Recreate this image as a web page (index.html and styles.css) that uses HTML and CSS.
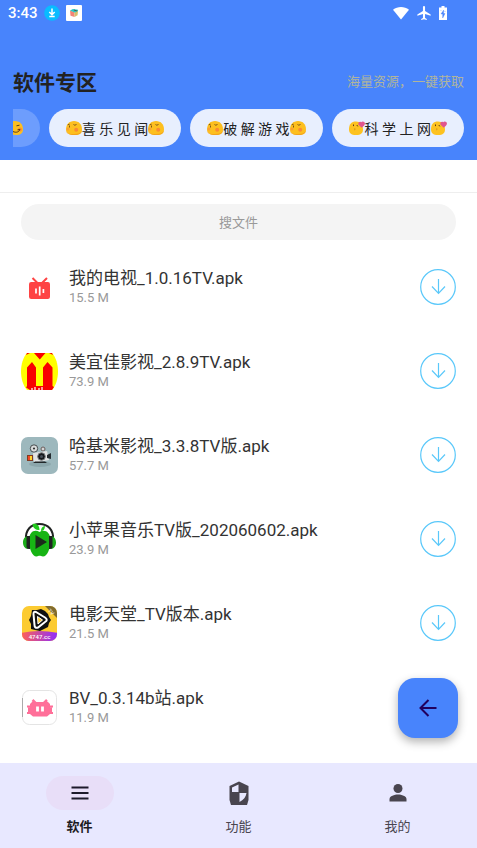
FILE: index.html
```html
<!DOCTYPE html>
<html lang="zh-CN">
<head>
  <meta charset="UTF-8">
  <meta name="viewport" content="width=device-width, initial-scale=1">
  <title>软件专区</title>
  <link rel="stylesheet" href="styles.css">
</head>
<body>

  <!-- shared icons -->
  <svg class="sprite" aria-hidden="true">
    <symbol id="shy" viewBox="0 0 16 16">
      <path d="M0 9.500C0 4.500 3 1 8 1s8 3.500 8 8.500c0 3.500-2 5.500-7.500 5.500S0 13 0 9.500z" fill="#fdbf1f"/>
      <path d="M0 10.500C1 13.500 3.500 14 8 14s7-1 7.900-3.500C15.600 13.500 13 15 8.500 15S.5 14 0 10.500z" fill="#f3a31d"/>
      <circle cx="1.900" cy="9" r="1.500" fill="#f9a035"/>
      <circle cx="10.200" cy="9.700" r="2" fill="#f98a35"/>
      <path d="M1.800 4.800l1.800-.6M3.500 5.500v2M7.500 4.500l1.300.7 1.700-.7" fill="none" stroke="#5c3b17" stroke-width=".8"/>
    </symbol>
    <symbol id="kiss" viewBox="0 0 16 16">
      <path d="M0 9.500C0 4 2.500 1.500 7 1.500s7 3.500 7 8c0 3.500-2 5.500-7 5.500S0 13 0 9.500z" fill="#fdc220"/>
      <path d="M4.500 4.500v1.600M7.800 5l1 1.400" fill="none" stroke="#5c3b17" stroke-width="1"/>
      <path d="M5 8.800l1.300.4-1 .8" fill="none" stroke="#c98a1c" stroke-width=".8"/>
      <path d="M12.700 7.800L9.600 4.800C8.400 2.900 10.700.8 12.100 2.300c1.400-1.800 4.200-.5 3.800 1.600-.3 1.600-1.900 2.200-3.200 3.900z" fill="#e0558d"/>
    </symbol>
    <symbol id="smirk" viewBox="0 0 16 16">
      <path d="M0 9.500C0 4.500 3 1 8 1s8 3.500 8 8.500c0 3.500-2 5.500-7.500 5.500S0 13 0 9.500z" fill="#fdbf1f"/>
      <circle cx="13" cy="9.500" r="1.900" fill="#f98a35"/>
      <path d="M6 11.500c3 1.500 6 .6 7-2l-2.500.3M9.500 5.800l3-.6" fill="none" stroke="#5c3b17" stroke-width="1"/>
    </symbol>
    <symbol id="download" viewBox="0 0 36 36">
      <circle cx="18" cy="18" r="17.300" fill="none" stroke="#5ac8fa" stroke-width="1.200"/>
      <path d="M18.500 10v14.500M12 17.500l6.500 6.800 6.500-6.800" fill="none" stroke="#5ac8fa" stroke-width="1.200"/>
    </symbol>
  </svg>

  <div class="app">
    <header class="header">
      <div class="status-bar">
        <span class="time">3:43</span>
        <svg width="16" height="16" viewBox="0 0 16 16"><circle cx="8" cy="8" r="7.800" fill="#09bcff"/><path d="M8 3.500v5.800M5.300 7L8 9.700 10.700 7M5.300 11.500h5.400" fill="none" stroke="#fff" stroke-width="1.500"/></svg>
        <svg width="16" height="16" viewBox="0 0 16 16"><rect width="16" height="16" rx="1" fill="#fff"/><path d="M4 5.500l4.500 1.800V12L4.500 10.800z" fill="#f28478"/><path d="M8.500 7.300L12 5.500l-.4 4.800L8.500 12z" fill="#d6bd6c"/><path d="M4 5.500l3-1.500 5 .7v1.200L8.500 7.400z" fill="#25c8c5"/><path d="M8 5l3 1" stroke="#55584b"/></svg>
        <div class="status-right">
          <svg width="16" height="14" viewBox="0 0 16 14"><path d="M8 13.500L0 3.800C4.500 0 11.500 0 16 3.800z" fill="#fff"/></svg>
          <svg width="14" height="14" viewBox="2 2 20 20"><path d="M21.500 16v-2l-8-5V3.500a1.500 1.500 0 0 0-3 0V9l-8 5v2l8-2.500V19L8 20.500V22l4-1 4 1v-1.500L13.500 19v-5.500z" fill="#fff"/></svg>
          <svg width="8" height="14" viewBox="0 0 8 14"><path d="M2.500 0h3v1.500H8V14H0V1.500h2.500z" fill="#fff"/><path d="M4.700 4L2 8h1.700v4L6 7.500H4.500zM1.500 4.500h1M5.500 5.500h1" fill="#4884fc" stroke="#4884fc" stroke-width=".4"/></svg>
        </div>
      </div>

      <div class="title-row">
        <h1>软件专区</h1>
        <p class="slogan">海量资源，一键获取</p>
      </div>

      <div class="chips">
        <button class="chip chip-active" aria-label="当前分类"><svg class="emoji"><use href="#smirk"/></svg></button>
        <button class="chip"><svg class="emoji"><use href="#shy"/></svg>喜 乐 见 闻<svg class="emoji"><use href="#shy"/></svg></button>
        <button class="chip"><svg class="emoji"><use href="#shy"/></svg>破 解 游 戏<svg class="emoji"><use href="#shy"/></svg></button>
        <button class="chip"><svg class="emoji"><use href="#kiss"/></svg>科 学 上 网<svg class="emoji"><use href="#kiss"/></svg></button>
      </div>
    </header>

    <div class="toolbar"></div>

    <main class="content">
      <input class="search" type="text" placeholder="搜文件" aria-label="搜文件">

      <ul class="files">
        <li class="file">
          <svg class="file-icon" viewBox="0 0 37 37"><path d="M11.500 9l6 6M26 9l-6 6" stroke="#fe4344" stroke-width="2"/><rect x="8" y="13" width="21" height="17" rx="2.200" fill="#fe4344"/><path d="M15 19.500v5M18.700 17.500v9M22.400 20v4" stroke="#fff" stroke-width="1.700"/></svg>
          <div class="file-info">
            <h2>我的电视_1.0.16TV.apk</h2>
            <p>15.5 M</p>
          </div>
          <button class="download" aria-label="下载"><svg><use href="#download"/></svg></button>
        </li>
        <li class="file">
          <svg class="file-icon" viewBox="0 0 37 37"><path d="M6 0h25c8 9 8 28 0 37H6C-2 28-2 9 6 0z" fill="#ff0"/><path d="M13 0h11.500l-5.700 6.500zM6 0h3L5 2zM28 0h3l1 2zM6 33V14.500l5-5.500 4 5.500V33h7V14.500L26.500 9l5 5.500V33L33 34l-2 3H9l-4-2.500z" fill="#f80000"/><path d="M11 37v-2M14 37v-3M18 37v-2M21 37v-3" stroke="#fff" stroke-width="1.200"/></svg>
          <div class="file-info">
            <h2>美宜佳影视_2.8.9TV.apk</h2>
            <p>73.9 M</p>
          </div>
          <button class="download" aria-label="下载"><svg><use href="#download"/></svg></button>
        </li>
        <li class="file">
          <svg class="file-icon" viewBox="0 0 37 37"><rect width="37" height="37" rx="7" fill="#9db8bd"/><ellipse cx="19" cy="27" rx="11" ry="3" fill="#8ba6ab"/><circle cx="13" cy="11.500" r="3.700" fill="#d9dcdc" stroke="#454b4d" stroke-width="1"/><circle cx="13" cy="11.500" r="1.100" fill="#333"/><circle cx="22" cy="12" r="2" fill="#d5d5d5" stroke="#6b5d5c"/><path d="M12 16l14-2 2 9-15 3z" fill="#e3e4e4"/><path d="M14 24.500h10l2 1.500H12z" fill="#202628"/><rect x="6" y="18" width="6" height="6" fill="#813b22"/><path d="M7 19h2v4H7z" fill="#f24722"/><path d="M9 19h2v4H9z" fill="#ffd42e"/><circle cx="20.500" cy="19.500" r="3.800" fill="#17191c" stroke="#777c80"/><circle cx="20.500" cy="19.500" r="1.500" fill="#48505b"/><path d="M26 18l4-2v6l-4-1z" fill="#252b30"/></svg>
          <div class="file-info">
            <h2>哈基米影视_3.3.8TV版.apk</h2>
            <p>57.7 M</p>
          </div>
          <button class="download" aria-label="下载"><svg><use href="#download"/></svg></button>
        </li>
        <li class="file">
          <svg class="file-icon" viewBox="0 0 37 37"><path d="M5 19C4 9 10 3 18.500 3S33 9 32 19" fill="none" stroke="#202322" stroke-width="2"/><path d="M18.500 11c-5-3-10.500 0-10.500 8.500C8 28 11.500 35.500 15.500 35.500c1.500 0 2-.7 3-.7s2 .7 3.500.7c4 0 7.500-7.500 7.500-16 0-8.500-6-11.500-11-8.500z" fill="#17b414"/><path d="M18.500 9c-4 0-6.500-2-7-6 4-1 7 1 7 6zM20 10c0-3 1.500-4.500 4-5 0 3-1.500 5-4 5z" fill="#20c91b"/><path d="M14.500 14l11.500 7-11.500 7z" fill="#1b2b1b"/><path d="M7 15v13c-3 0-5-3-5-6.500S4 15 7 15zM30 15v13c3 0 5-3 5-6.500S33 15 30 15z" fill="#1bac19"/><path d="M5.500 15h3.500v13c-2 0-3.500-.5-3.500-2zM28 15h3.500v11c0 1.500-1.500 2-3.500 2z" fill="#202322"/></svg>
          <div class="file-info">
            <h2>小苹果音乐TV版_202060602.apk</h2>
            <p>23.9 M</p>
          </div>
          <button class="download" aria-label="下载"><svg><use href="#download"/></svg></button>
        </li>
        <li class="file">
          <svg class="file-icon" viewBox="0 0 37 37">
            <defs>
              <linearGradient id="ribbon"><stop offset="0" stop-color="#ff6254"/><stop offset="1" stop-color="#8d2cff"/></linearGradient>
              <clipPath id="round"><rect x="1" y="1" width="35" height="35" rx="7"/></clipPath>
            </defs>
            <g clip-path="url(#round)">
              <path d="M0 0h37v37H0z" fill="#fccb32"/>
              <path d="M23 0h14v14z" fill="#806b2f"/>
              <path d="M11 5l5 0 4-1 4 2 3 3 1 3 2 3-2 3-1 4-4 2-4 2-5-1-4-1v-5l-2-4 2-4z" fill="#111"/>
              <path d="M15 7l9 5.500q3.500 2.500 0 4.500l-7 5.500q-3.500 1-3.500-2.500L12.500 9q0-3 2.500-2z" fill="#111" stroke="#fff" stroke-width="2"/>
              <path d="M16.500 11.500l5 3.500-4.500 4z" fill="#fccb32" stroke="#fff"/>
              <path d="M0 28q18-4 37 0v9H0z" fill="url(#ribbon)"/>
              <text class="ribbon-text" x="18.500" y="33.500" text-anchor="middle">4747.cc</text>
              <text class="corner-text" x="26.500" y="6" transform="rotate(45 26.500 6)">TV</text>
            </g>
          </svg>
          <div class="file-info">
            <h2>电影天堂_TV版本.apk</h2>
            <p>21.5 M</p>
          </div>
          <button class="download" aria-label="下载"><svg><use href="#download"/></svg></button>
        </li>
        <li class="file">
          <svg class="file-icon" viewBox="0 0 37 37"><rect x="1.500" y="1.500" width="34" height="34" rx="7" fill="#fff" stroke="#ddd" stroke-width=".8"/><path d="M1.500 9v19" stroke="#aaa"/><path d="M11.500 11l4 4M26 11l-4 4" stroke="#ff6f99" stroke-width="2.500"/><path d="M6 17.500h26M6 24h26" stroke="#ff6f99" stroke-width="2"/><path d="M11 13h16l2 2v10l-3 2.500H12L9 25V15z" fill="#ff6f99"/><path d="M16.500 17.500v5M21.500 17.500v5" stroke="#fff" stroke-width="2.800"/><path d="M7 20.700h3M28 20.700h3" stroke="#ff6f99" stroke-width="5"/></svg>
          <div class="file-info">
            <h2>BV_0.3.14b站.apk</h2>
            <p>11.9 M</p>
          </div>
          <button class="download" aria-label="下载"><svg><use href="#download"/></svg></button>
        </li>
      </ul>

      <button class="fab" aria-label="返回"><svg width="24" height="24" viewBox="0 0 24 24"><path d="M20.500 12H5M12.500 4L4.500 12l8 8" fill="none" stroke="#21005d" stroke-width="2"/></svg></button>
    </main>

    <nav class="bottom-nav">
      <a class="nav-item active" href="#">
        <span class="nav-icon"><svg width="24" height="24" viewBox="0 0 24 24"><path d="M3.500 6.500h17M3.500 12h17M3.500 17.500h17" stroke="#1d192b" stroke-width="2"/></svg></span>
        软件
      </a>
      <a class="nav-item" href="#">
        <span class="nav-icon"><svg width="24" height="26" viewBox="0 0 24 26"><path d="M12 1.500L21.500 6v14l-1.500 5H4l-1.500-5V6z" fill="#49454f"/><path d="M11.500 4.500V12H5V7.500zM12.500 13H19.500c-.5 4-3 7-7 9z" fill="#e8e8ff"/></svg></span>
        功能
      </a>
      <a class="nav-item" href="#">
        <span class="nav-icon"><svg width="24" height="24" viewBox="0 0 24 24"><circle cx="12" cy="7.500" r="4.500" fill="#49454f"/><path d="M3.500 20.500v-2.500c0-3 5-4.500 8.500-4.500s8.500 1.500 8.500 4.500v2.500z" fill="#49454f"/></svg></span>
        我的
      </a>
    </nav>
  </div>

</body>
</html>
```

FILE: styles.css
```css
* { box-sizing: border-box; }
body { margin: 0; font-family: Roboto, "Noto Sans CJK SC", sans-serif; background: #fff; color: #333; }
h1, h2, p, ul { margin: 0; padding: 0; }
button { border: 0; padding: 0; font-family: inherit; cursor: pointer; }
svg { display: block; flex-shrink: 0; }
.sprite { position: absolute; width: 0; height: 0; }

.app { display: flex; flex-direction: column; height: 100vh; }

/* header */
.header { background: #4884fc; padding: 0 13px 13px; }
.status-bar { display: flex; align-items: center; gap: 6px; height: 26px; margin: 0 17px 0 -5px; color: #fff; }
.time { font-size: 15px; font-weight: 500; }
.status-right { display: flex; gap: 8px; margin-left: auto; }
.title-row { display: flex; align-items: flex-start; justify-content: space-between; height: 32px; margin-top: 41px; }
.title-row h1 { font-size: 21px; line-height: 32px; font-weight: 700; color: #222; }
.slogan { font-size: 13px; line-height: 30px; color: #b0b59b; }
.chips { display: flex; justify-content: flex-end; gap: 9px; margin-top: 10px; overflow: hidden; }
.chip { display: flex; align-items: center; flex-shrink: 0; height: 38px; padding: 0 17px; border-radius: 19px; background: #e8effe; color: #222; font-size: 14px; white-space: nowrap; }
.chip-active { background: #6d9dfd; }
.emoji { width: 16px; height: 16px; }

.toolbar { height: 33px; border-bottom: 1px solid #eee; flex-shrink: 0; }

/* file list */
.content { position: relative; flex: 1; min-height: 0; display: flex; flex-direction: column; padding: 11px 21px 0; }
.search { width: 100%; height: 36px; flex-shrink: 0; border: 0; border-radius: 18px; background: #f4f4f4; font-family: inherit; font-size: 13px; text-align: center; color: #333; }
.search::placeholder { color: #999; }
.files { list-style: none; flex: 1; min-height: 0; margin-top: 5px; overflow: hidden; }
.file { display: flex; align-items: center; gap: 11px; height: 84px; }
.file-icon { width: 37px; height: 37px; }
.file-info { flex: 1; min-width: 0; }
.file-info h2 { font-size: 17px; line-height: 22px; font-weight: 400; color: #333; }
.file-info p { font-size: 13px; line-height: 18px; color: #999; }
.ribbon-text { font-size: 6px; font-weight: 500; fill: #fff; }
.corner-text { font-size: 5px; fill: #fff; }
.download { background: none; width: 36px; height: 36px; }
.download svg { width: 36px; height: 36px; }

.fab { position: absolute; right: 19px; bottom: 25px; width: 60px; height: 60px; display: flex; align-items: center; justify-content: center; border-radius: 17px; background: #4884fc; box-shadow: 0 4px 10px rgba(0, 0, 0, 0.3); }

/* bottom navigation */
.bottom-nav { display: flex; flex-shrink: 0; height: 85px; padding-top: 13px; background: #e8e8ff; }
.nav-item { flex: 1; display: flex; flex-direction: column; align-items: center; gap: 7px; font-size: 13px; line-height: 20px; color: #49454f; text-decoration: none; }
.nav-item.active { color: #1c1b1f; font-weight: 700; }
.nav-icon { display: flex; align-items: center; justify-content: center; width: 68px; height: 34px; border-radius: 17px; }
.active .nav-icon { background: #e8def8; }
```
